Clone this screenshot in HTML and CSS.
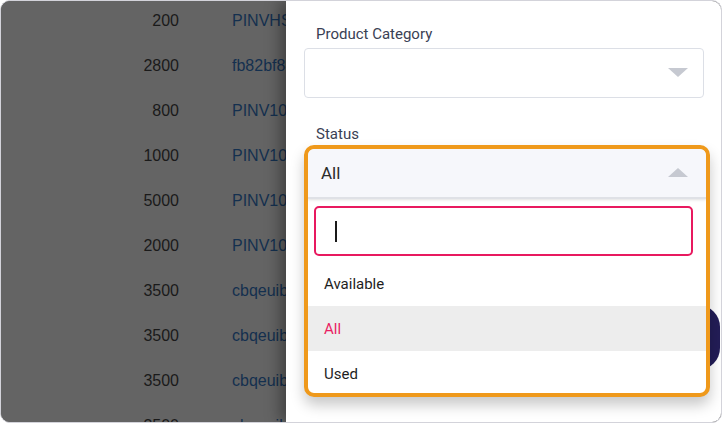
FILE: index.html
```html
<!DOCTYPE html>
<html>
<head>
<meta charset="utf-8">
<link rel="stylesheet" href="styles.css">
</head>
<body>
<div class="frame">
  <div class="table">
    <div class="row"><span class="num">200</span><span class="ref">PINVHS0001</span></div>
    <div class="row"><span class="num">2800</span><span class="ref">fb82bf84a1</span></div>
    <div class="row"><span class="num">800</span><span class="ref">PINV10001</span></div>
    <div class="row"><span class="num">1000</span><span class="ref">PINV10002</span></div>
    <div class="row"><span class="num">5000</span><span class="ref">PINV10003</span></div>
    <div class="row"><span class="num">2000</span><span class="ref">PINV10004</span></div>
    <div class="row"><span class="num">3500</span><span class="ref">cbqeuibd</span></div>
    <div class="row"><span class="num">3500</span><span class="ref">cbqeuibd</span></div>
    <div class="row"><span class="num">3500</span><span class="ref">cbqeuibd</span></div>
    <div class="row"><span class="num">3500</span><span class="ref">cbqeuibd</span></div>
  </div>
  <div class="drawer">
    <div class="field">
      <div class="label">Product Category</div>
      <div class="select"><span class="caret down"></span></div>
    </div>
    <div class="field status">
      <div class="label">Status</div>
      <div class="focus">
        <div class="select open"><span class="value">All</span><span class="caret up"></span></div>
        <div class="menu">
          <div class="search"><span class="cursor"></span></div>
          <div class="option">Available</div>
          <div class="option active">All</div>
          <div class="option">Used</div>
        </div>
      </div>
    </div>
    <div class="fab"></div>
  </div>
</div>
</body>
</html>
```

FILE: styles.css
```css
* { box-sizing: border-box; }
html, body { margin: 0; padding: 0; background: #ffffff; }
body { font-family: Roboto, "Noto Sans", sans-serif; }

.frame {
  width: 722px;
  height: 423px;
  border: 1px solid #d3d3da;
  border-radius: 10px;
  overflow: hidden;
  display: grid;
  grid-template-columns: 285px 1fr;
  background: #646464;
}

.table {
  background: #646464;
  margin-top: -3px;
  overflow: hidden;
  font-family: "Liberation Sans", Arial, sans-serif;
}
.row {
  height: 45px;
  display: grid;
  grid-template-columns: 178px 1fr;
  column-gap: 53px;
  align-items: center;
  font-size: 16px;
  white-space: nowrap;
}
.num { text-align: right; color: #1a1a1a; }
.ref { color: #14304f; overflow: hidden; }

.drawer {
  position: relative;
  background: #ffffff;
  box-shadow: -6px 0 14px rgba(0, 0, 0, 0.35);
  padding: 0 17px 0 18px;
  z-index: 1;
}

.field { display: flex; flex-direction: column; }
.label {
  font-size: 15px;
  color: #3a4154;
  padding-left: 12px;
  height: 20px;
  line-height: 20px;
  margin-top: 23px;
  margin-bottom: 4px;
}
.select {
  position: relative;
  width: 400px;
  height: 50px;
  border: 1px solid #dcdfe6;
  border-radius: 4px;
  background: #ffffff;
  display: flex;
  align-items: center;
}
.caret {
  position: absolute;
  right: 15px;
  width: 0; height: 0;
  border-left: 10px solid transparent;
  border-right: 10px solid transparent;
}
.caret.down { border-top: 9px solid #c6c9d1; top: 19px; }
.caret.up { border-bottom: 9px solid #c6c9d1; top: 19px; right: 18px; }

.status .label { margin-top: 26px; margin-bottom: 1px; }

.focus {
  position: relative;
  width: 406px;
  height: 252px;
  border: 4px solid #ef991b;
  border-radius: 10px;
  background: #ffffff;
  box-shadow: 0 8px 14px rgba(0, 0, 0, 0.22);
  overflow: hidden;
  z-index: 2;
}
.select.open {
  width: 100%;
  height: 50px;
  border: none;
  border-bottom: 2px solid #dfe1e6;
  border-radius: 6px 6px 0 0;
  background: #f6f7fb;
  box-shadow: 0 1px 3px rgba(0,0,0,0.12);
  padding-left: 13px;
}
.value { font-size: 17px; color: #2b2b2b; }

.menu { padding-top: 7px; }
.search {
  margin-left: 6px;
  width: 379px;
  height: 50px;
  border: 2px solid #e8195f;
  border-radius: 5px;
  display: flex;
  align-items: center;
  padding-left: 19px;
}
.cursor { width: 2px; height: 21px; background: #1a1a1a; }

.option {
  height: 45px;
  display: flex;
  align-items: center;
  padding-left: 16px;
  font-size: 15px;
  color: #1e1e1e;
}
.menu .search + .option { margin-top: 6px; height: 44px; padding-bottom: 1px; }
.option.active { background: #ededed; color: #e91e63; }

.fab {
  position: absolute;
  left: 314px;
  top: 304px;
  width: 120px;
  height: 65px;
  background: #231d57;
  border-radius: 22px;
}
```
